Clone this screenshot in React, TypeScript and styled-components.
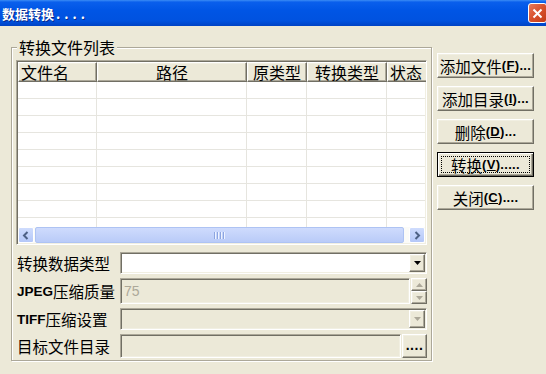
import styled, { createGlobalStyle, css } from 'styled-components'

const GlobalStyle = createGlobalStyle`
  html, body {
    margin: 0;
    padding: 0;
    background: #ece9d8;
  }
  body {
    font-family: "Noto Sans CJK SC", "Liberation Sans", sans-serif;
    color: #000;
  }
`

// classic 3D edges
const raised = css`
  border: 1px solid;
  border-color: #fff #716f64 #716f64 #fff;
  box-shadow: inset -1px -1px 0 #aca899, inset 1px 1px 0 #f1efe2;
`
const sunken = css`
  border: 1px solid;
  border-color: #aca899 #fff #fff #aca899;
  box-shadow: inset 1px 1px 0 #716f64, inset -1px -1px 0 #f1efe2;
`

const Window = styled.div`
  width: 546px;
  height: 374px;
  background: #ece9d8;
  display: flex;
  flex-direction: column;
  overflow: hidden;
`

const TitleBar = styled.div`
  height: 26px;
  flex: none;
  display: flex;
  align-items: center;
  justify-content: space-between;
  background: linear-gradient(
    to bottom,
    #3b8cf5 0%,
    #0a5fec 8%,
    #0055e5 40%,
    #0052df 80%,
    #0043c4 100%
  );
`

const TitleText = styled.span`
  color: #fff;
  font-weight: bold;
  font-size: 13px;
  padding-left: 2px;
  text-shadow: 1px 1px 0 #0a2a8a;

  .dots {
    letter-spacing: 4px;
    padding-left: 2px;
  }
`

const CloseButton = styled.div`
  width: 19px;
  height: 20px;
  margin-right: -1px;
  box-sizing: border-box;
  border: 1px solid #fff;
  border-radius: 3px;
  background: linear-gradient(135deg, #e87a5c 0%, #d8512d 50%, #c23b18 100%);
  display: flex;
  align-items: center;
  justify-content: center;
`

const Body = styled.div`
  display: flex;
  align-items: flex-start;
  gap: 5px;
  padding: 21px 0 0 11px;
`

const GroupBox = styled.div`
  position: relative;
  width: 421px;
  height: 314px;
  box-sizing: border-box;
  border: 1px solid #aca899;
  box-shadow: inset 1px 1px 0 #fff, 1px 1px 0 #fff;
  padding: 12px 4px 0 4px;
`

const Legend = styled.span`
  position: absolute;
  top: -11px;
  left: 5px;
  padding: 0 2px;
  background: #ece9d8;
  font-size: 16px;
  line-height: 20px;
`

const ListView = styled.div`
  width: 411px;
  height: 185px;
  box-sizing: border-box;
  ${sunken};
  padding: 1px;
  background: #fff;
  display: flex;
  flex-direction: column;
  overflow: hidden;
`

const HeaderRow = styled.div`
  display: flex;
  flex: none;
  height: 20px;
`

const HeaderCell = styled.div<{ $w: number; $align?: string }>`
  flex: none;
  width: ${(p) => p.$w}px;
  height: 20px;
  box-sizing: border-box;
  ${raised};
  background: #ece9d8;
  font-size: 16px;
  line-height: 18px;
  text-align: ${(p) => p.$align || 'center'};
  padding-left: ${(p) => (p.$align === 'left' ? 2 : 0)}px;
  white-space: nowrap;
`

const ListBody = styled.div`
  flex: 1;
  overflow: hidden;
`

const ListRow = styled.div`
  display: flex;
  height: 17px;
  box-sizing: border-box;
  border-bottom: 1px solid #e6e5df;
`

const ListCell = styled.div<{ $w: number }>`
  flex: none;
  width: ${(p) => p.$w}px;
  box-sizing: border-box;
  border-right: 1px solid #e6e5df;
`

const HScroll = styled.div`
  flex: none;
  height: 16px;
  display: flex;
  background: #fbfbf8;
`

const ScrollArrow = styled.div`
  width: 16px;
  height: 16px;
  flex: none;
  box-sizing: border-box;
  border: 1px solid #fff;
  border-radius: 2px;
  background: linear-gradient(to bottom, #cfdcfd, #b4c7f8);
  display: flex;
  align-items: center;
  justify-content: center;
`

const ScrollThumb = styled.div`
  flex: 1;
  margin: 0 5px 0 1px;
  box-sizing: border-box;
  border: 1px solid #aec3f3;
  border-radius: 2px;
  background: linear-gradient(to bottom, #cedbfd, #b9cbf8);
  display: flex;
  align-items: center;
  justify-content: center;
  gap: 1px;
`

const Grip = styled.span`
  width: 1px;
  height: 7px;
  background: #8ca5e0;
  box-shadow: 1px 0 0 #eef3ff;
  margin-right: 1px;
`

const FormGrid = styled.div`
  display: grid;
  grid-template-columns: 104px 307px;
  grid-template-rows: 22px 26px 22px 24px;
  row-gap: 4px;
  margin-top: 7px;
`

const FieldLabel = styled.div`
  display: flex;
  align-items: center;
  padding-left: 1px;
  font-size: 15.5px;
  white-space: nowrap;
`

const Latin = styled.span`
  font-family: "Liberation Sans", sans-serif;
  font-weight: bold;
  font-size: 13.5px;
`

const FieldRow = styled.div`
  display: flex;
  gap: 1px;
`

const FieldBox = styled.div<{ $disabled?: boolean }>`
  flex: 1;
  display: flex;
  align-items: center;
  box-sizing: border-box;
  ${sunken};
  padding: 1px;
  background: ${(p) => (p.$disabled ? '#ece9d8' : '#fff')};
`

const FieldText = styled.span`
  font-family: "Liberation Sans", sans-serif;
  font-size: 14px;
  color: #aca899;
  padding-left: 2px;
`

const DropButton = styled.div`
  margin-left: auto;
  width: 16px;
  height: 100%;
  box-sizing: border-box;
  ${raised};
  background: #ece9d8;
  display: flex;
  align-items: center;
  justify-content: center;
`

const SpinColumn = styled.div`
  width: 16px;
  display: flex;
  flex-direction: column;
`

const SpinButton = styled.div`
  flex: 1;
  box-sizing: border-box;
  ${raised};
  background: #ece9d8;
  display: flex;
  align-items: center;
  justify-content: center;
`

const BrowseButton = styled.div`
  width: 25px;
  box-sizing: border-box;
  ${raised};
  background: #ece9d8;
  font-family: "Liberation Sans", sans-serif;
  font-weight: bold;
  font-size: 14px;
  letter-spacing: 0.5px;
  display: flex;
  align-items: center;
  justify-content: center;
  padding-bottom: 3px;
`

const SideButtons = styled.div`
  width: 97px;
  margin-top: 6px;
  display: flex;
  flex-direction: column;
  gap: 8px;
`

const PushButton = styled.div<{ $default?: boolean }>`
  height: 25px;
  box-sizing: border-box;
  background: #ece9d8;
  display: flex;
  align-items: center;
  justify-content: center;
  font-size: 15.5px;
  white-space: nowrap;
  ${(p) =>
    p.$default
      ? css`
          border: 1px solid #000;
          box-shadow: inset 1px 1px 0 #fff, inset -1px -1px 0 #716f64,
            inset -2px -2px 0 #aca899;
          outline: 1px dotted #000;
          outline-offset: -5px;
        `
      : raised};
`

const Mnemonic = styled.span`
  font-family: "Liberation Sans", sans-serif;
  font-weight: bold;
  font-size: 13px;
  letter-spacing: 0.3px;
`

const columns = [
  { w: 79, label: '文件名', align: 'left' },
  { w: 150, label: '路径' },
  { w: 60, label: '原类型' },
  { w: 80, label: '转换类型' },
  { w: 60, label: '状态', align: 'left' },
]

const Arrow = ({ color, up }: { color: string; up?: boolean }) => (
  <svg width="7" height="4" viewBox="0 0 7 4">
    <path d={up ? 'M0 4 L3.5 0 L7 4 Z' : 'M0 0 L7 0 L3.5 4 Z'} fill={color} />
  </svg>
)

const Chevron = ({ right }: { right?: boolean }) => (
  <svg width="8" height="9" viewBox="0 0 8 9">
    <path
      d={right ? 'M2.5 1 L6 4.5 L2.5 8' : 'M5.5 1 L2 4.5 L5.5 8'}
      fill="none"
      stroke="#4d6185"
      strokeWidth="2"
    />
  </svg>
)

const SideButton = ({
  text,
  letter,
  dots,
  isDefault,
}: {
  text: string
  letter: string
  dots: string
  isDefault?: boolean
}) => (
  <PushButton $default={isDefault}>
    {text}
    <Mnemonic>
      (<u>{letter}</u>){dots}
    </Mnemonic>
  </PushButton>
)

export default function App() {
  return (
    <Window>
      <GlobalStyle />
      <TitleBar>
        <TitleText>
          数据转换<span className="dots">....</span>
        </TitleText>
        <CloseButton>
          <svg width="11" height="11" viewBox="0 0 11 11">
            <path d="M1.5 1.5 L9.5 9.5 M9.5 1.5 L1.5 9.5" stroke="#fff" strokeWidth="2" />
          </svg>
        </CloseButton>
      </TitleBar>

      <Body>
        <GroupBox>
          <Legend>转换文件列表</Legend>
          <ListView>
            <HeaderRow>
              {columns.map((c) => (
                <HeaderCell key={c.label} $w={c.w} $align={c.align}>
                  {c.label}
                </HeaderCell>
              ))}
            </HeaderRow>
            <ListBody>
              {Array.from({ length: 9 }).map((_, i) => (
                <ListRow key={i}>
                  {columns.map((c) => (
                    <ListCell key={c.label} $w={c.w} />
                  ))}
                </ListRow>
              ))}
            </ListBody>
            <HScroll>
              <ScrollArrow>
                <Chevron />
              </ScrollArrow>
              <ScrollThumb>
                <Grip />
                <Grip />
                <Grip />
                <Grip />
              </ScrollThumb>
              <ScrollArrow>
                <Chevron right />
              </ScrollArrow>
            </HScroll>
          </ListView>

          <FormGrid>
            <FieldLabel>转换数据类型</FieldLabel>
            <FieldRow>
              <FieldBox>
                <DropButton>
                  <Arrow color="#000" />
                </DropButton>
              </FieldBox>
            </FieldRow>

            <FieldLabel>
              <Latin>JPEG</Latin>压缩质量
            </FieldLabel>
            <FieldRow>
              <FieldBox $disabled>
                <FieldText>75</FieldText>
              </FieldBox>
              <SpinColumn>
                <SpinButton>
                  <Arrow color="#aca899" up />
                </SpinButton>
                <SpinButton>
                  <Arrow color="#aca899" />
                </SpinButton>
              </SpinColumn>
            </FieldRow>

            <FieldLabel>
              <Latin>TIFF</Latin>压缩设置
            </FieldLabel>
            <FieldRow>
              <FieldBox $disabled>
                <DropButton>
                  <Arrow color="#aca899" />
                </DropButton>
              </FieldBox>
            </FieldRow>

            <FieldLabel>目标文件目录</FieldLabel>
            <FieldRow>
              <FieldBox $disabled />
              <BrowseButton>....</BrowseButton>
            </FieldRow>
          </FormGrid>
        </GroupBox>

        <SideButtons>
          <SideButton text="添加文件" letter="F" dots="..." />
          <SideButton text="添加目录" letter="I" dots="..." />
          <SideButton text="删除" letter="D" dots="..." />
          <SideButton text="转换" letter="V" dots="....." isDefault />
          <SideButton text="关闭" letter="C" dots="...." />
        </SideButtons>
      </Body>
    </Window>
  )
}
